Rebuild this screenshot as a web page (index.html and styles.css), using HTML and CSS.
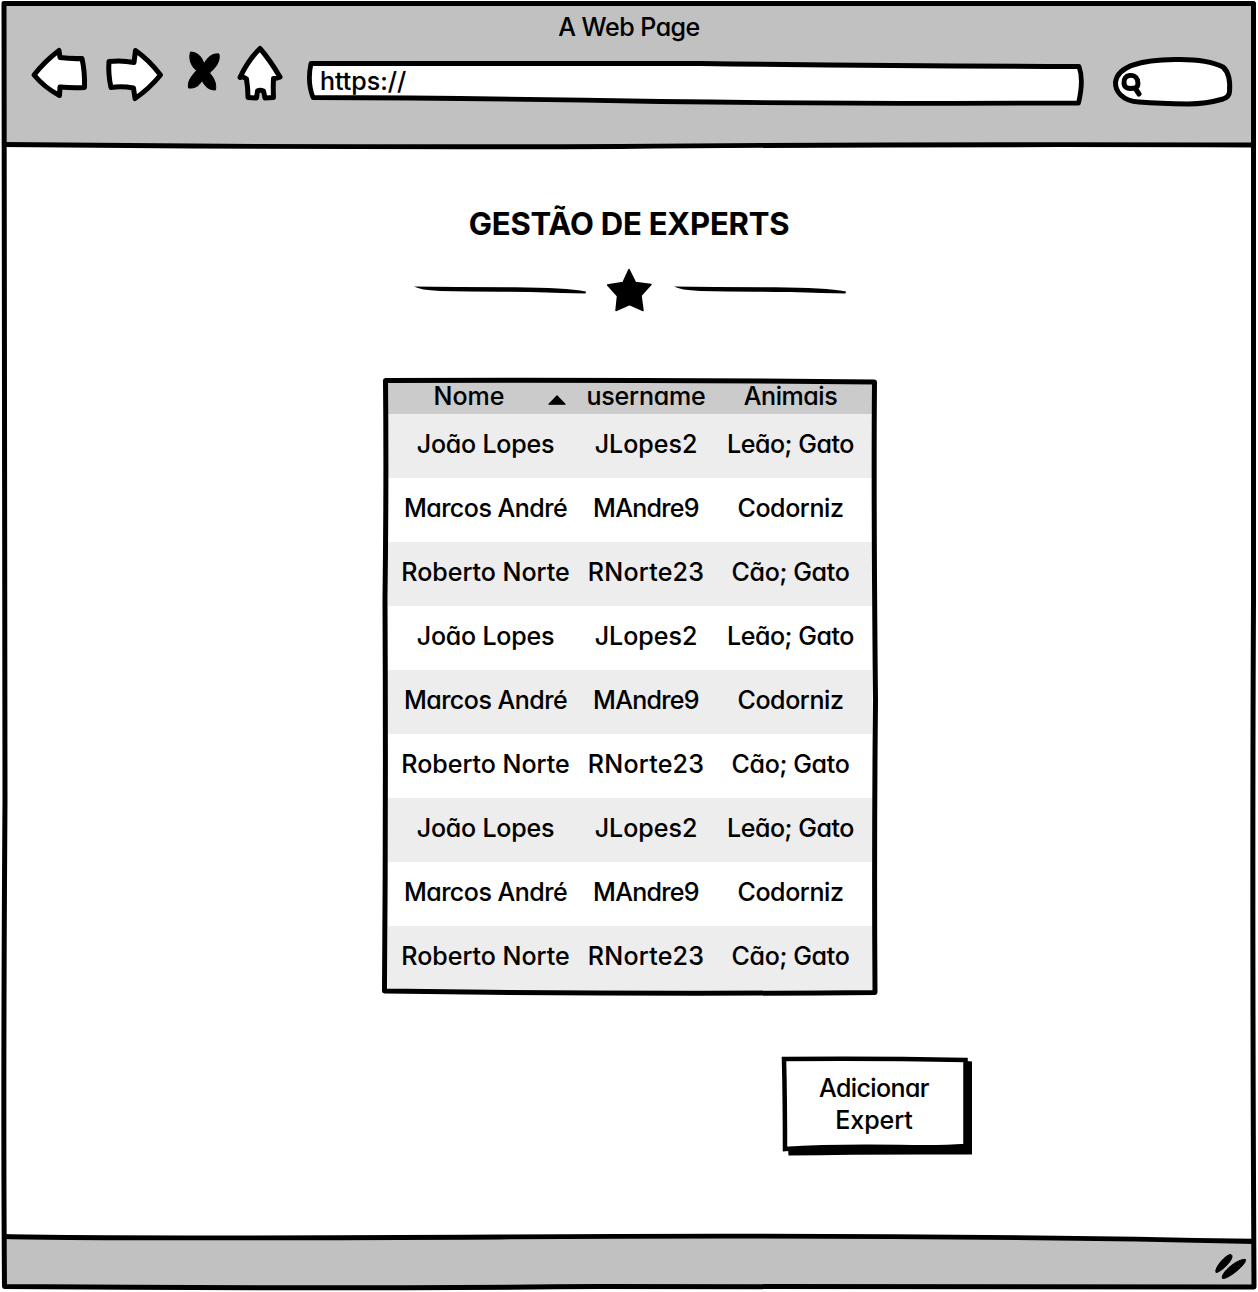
FILE: index.html
```html
<!DOCTYPE html>
<html lang="pt">
<head>
<meta charset="utf-8">
<title>Gestão de Experts</title>
<link rel="stylesheet" href="styles.css">
</head>
<body>
<div class="window">
  <header class="chrome">
    <div class="chrome-title">A Web Page</div>
    <div class="toolbar">
      <svg class="nav-icons" width="260" height="60" viewBox="28 44 260 60">
        <g fill="#fff" stroke="#000" stroke-width="5" stroke-linejoin="round" stroke-linecap="round">
          <path d="M34 75Q45 61 59 50.500L60 57.500Q71 59 82 58.500Q85 72 84.500 87.500Q72 88 60 87L59.500 95.500Q45 88 34 75Z"/>
          <path d="M109 61.500Q122 60 134 62.500L135.500 50.500Q149 60 160.500 75Q149 89 135 98.500L133.500 88Q122 86 111 87.500Q108 74 109 61.500Z"/>
          <path d="M260 48.500Q270 60 280 77Q277 78.500 273.500 78.500Q273 88 273.500 97.500L265 98L263.500 91Q260 89.500 257.500 91L256.500 98L248 97.500Q248 88 246.500 79Q243 76 240 77.500Q248 60 260 48.500Z"/>
        </g>
        <path d="M190.500 52C198 52.500 202 57 204 64C207 58 212 53 219 54C220.500 62 215 68 209.500 73C214 78 216.500 83 215.500 90C208 90 205 86 202 80.500C199 86 195 88.500 188.500 88C187.500 81 191 77 196.500 70.500C191 66 188.500 59 190.500 52Z" stroke="#000" stroke-linejoin="round"/>
      </svg>
      <div class="address">
        <svg class="sketch" width="778" height="46" viewBox="306 60 778 46"><path d="M311 63.500Q500 63 700 63.500Q900 66 1079 66.500Q1084 80 1078.500 103Q850 104 660 101.500Q480 98 313 97.500Q307 82 311 63.500Z" fill="#fff" stroke="#000" stroke-width="4.800" stroke-linejoin="round"/></svg>
        <span>https://</span>
      </div>
      <svg class="search" width="122" height="52" viewBox="1112 56 122 52">
        <path d="M1139 102C1122 101 1115 91 1115.500 82C1118 65 1143 60 1175 59.500C1197 59 1211 61 1223 67Q1231 74 1229.500 92Q1229 97 1223 99Q1206 104 1188 104Q1160 103.500 1139 102Z" fill="#fff" stroke="#000" stroke-width="5"/>
        <path d="M1124 83C1123 74 1135 73 1137.500 80Q1139 87 1135 88Q1124 90 1124 83ZM1135 88L1139 94" fill="none" stroke="#000" stroke-width="5" stroke-linecap="round"/>
      </svg>
    </div>
  </header>

  <main class="content">
    <h1 class="heading">GESTÃO DE EXPERTS</h1>
    <div class="divider">
      <svg width="172" height="8" viewBox="414 286 172 8"><path d="M414 286.500Q455 287 515 287.200Q565 287.500 586 291.500L585.500 293.500Q565 293 530 292Q470 291.500 440 291Q420 290 414 286.500Z"/></svg>
      <svg width="46" height="44" viewBox="607 268 46 44"><path d="M629 269.500L635.500 282.500L651 284.500L641 295.500L643 310.500L629.500 304.500L616 310.500L617.500 296L607.500 285L623 282.500Z" stroke="#000" stroke-width="1.500" stroke-linejoin="round"/></svg>
      <svg width="172" height="8" viewBox="414 286 172 8"><path d="M414 286.500Q455 287 515 287.200Q565 287.500 586 291.500L585.500 293.500Q565 293 530 292Q470 291.500 440 291Q420 290 414 286.500Z"/></svg>
    </div>

    <section class="experts">
      <div class="row head"><span>Nome</span><svg class="sort" width="18" height="10" viewBox="0 0 18 10"><path d="M9 .800L17 9.200H1Z" stroke="#000" stroke-width="1.200" stroke-linejoin="round"/></svg><span class="jl">username</span><span class="lg">Animais</span></div>
      <div class="row"><span class="jl">João Lopes</span><span>JLopes2</span><span class="lg">Leão; Gato</span></div>
      <div class="row"><span class="ma">Marcos André</span><span class="ma9">MAndre9</span><span class="co">Codorniz</span></div>
      <div class="row"><span>Roberto Norte</span><span class="rn23">RNorte23</span><span class="cg">Cão; Gato</span></div>
      <div class="row"><span class="jl">João Lopes</span><span>JLopes2</span><span class="lg">Leão; Gato</span></div>
      <div class="row"><span class="ma">Marcos André</span><span class="ma9">MAndre9</span><span class="co">Codorniz</span></div>
      <div class="row"><span>Roberto Norte</span><span class="rn23">RNorte23</span><span class="cg">Cão; Gato</span></div>
      <div class="row"><span class="jl">João Lopes</span><span>JLopes2</span><span class="lg">Leão; Gato</span></div>
      <div class="row"><span class="ma">Marcos André</span><span class="ma9">MAndre9</span><span class="co">Codorniz</span></div>
      <div class="row"><span>Roberto Norte</span><span class="rn23">RNorte23</span><span class="cg">Cão; Gato</span></div>
      <svg class="table-outline" width="500" height="620" viewBox="380 376 500 620"><path d="M385.500 380.500Q620 379.500 874.500 382Q873.500 500 875.500 700Q874 850 875 992.500Q630 994.500 384.500 991Q386 800 385 600Q386.500 480 385.500 380.500Z" fill="none" stroke="#000" stroke-width="5" stroke-linejoin="round"/></svg>
    </section>

    <button class="add" type="button">
      <svg class="sketch" width="192" height="100" viewBox="780 1056 192 100"><path d="M966 1061L972 1061.500V1154.500Q870 1154 788.500 1155.500L788 1148H966Z"/><path d="M784 1059Q870 1058 965.500 1060V1146Q940 1148 900 1147Q830 1146 785 1149Q785 1100 784 1059Z" fill="#fff" stroke="#000" stroke-width="4.500"/></svg>
      <span class="add-text"><span class="adic">Adicionar</span><span>Expert</span></span>
    </button>
  </main>

  <footer class="status">
    <svg width="34" height="28" viewBox="1213 1252 34 28"><path d="M1216 1272.500C1214 1268 1226 1254 1231 1254.500C1236 1258 1221 1272.500 1216 1272.500ZM1222.500 1278.500C1220 1273 1238 1258 1245.500 1259.500C1247 1264 1228 1279.500 1222.500 1278.500Z" stroke="#000" stroke-linejoin="round"/></svg>
  </footer>

  <svg class="outline" width="1258" height="1292" viewBox="0 0 1258 1292">
    <path d="M3 144.500Q300 147.500 620 146.500Q900 144 1254 145M4 1236.500Q100 1239 500 1237Q900 1234 1254 1241.500" fill="none" stroke="#000" stroke-width="4.800"/>
    <path d="M4.500 3.500H1253.500Q1253 250 1253.500 600Q1252 900 1254 1287Q900 1286 600 1286.500Q300 1289 4.500 1286.500Q3 1100 5 800Q3 450 4 3.500Z" fill="none" stroke="#000" stroke-width="5" stroke-linejoin="round"/>
  </svg>
</div>
</body>
</html>
```
FILE: styles.css
```css
* { box-sizing: border-box; }
body {
  margin: 0;
  background: #fff;
  color: #000;
  font: 500 25px/32px Inter, "Liberation Sans", sans-serif;
  font-feature-settings: "cv11" 1;
  -webkit-text-stroke: 0.1px #000;
}
svg { display: block; }
.window {
  position: relative;
  width: 1258px;
  height: 1292px;
  padding: 4px;
  display: grid;
  grid-template-rows: 142px 1fr 50px;
  overflow: hidden;
}
.outline { position: absolute; inset: 0; pointer-events: none; }
.chrome { background: #c1c1c1; }
.chrome-title { height: 40px; padding-top: 7px; text-align: center; letter-spacing: -0.5px; }
.toolbar { display: flex; align-items: flex-start; padding-left: 24px; }
.address {
  position: relative;
  display: flex;
  align-items: center;
  width: 778px;
  height: 46px;
  margin: 16px 28px 0 18px;
  padding: 0 0 5px 14px;
}
.sketch { position: absolute; inset: 0; }
.address span { position: relative; }
.search { margin-top: 12px; }

.content { display: flex; flex-direction: column; align-items: center; padding-top: 58px; }
.heading { margin: 0; font-size: 31px; line-height: 40px; font-weight: 700; letter-spacing: -0.2px; }
.divider { display: flex; align-items: center; gap: 21px; margin: 24px 0 0 2px; }
.experts {
  position: relative;
  width: 484px;
  margin: 70px 0 0 2px;
}
.row {
  display: grid;
  grid-template-columns: 195px 126px 163px;
  align-items: center;
  justify-items: center;
  height: 64px;
  padding-bottom: 5px;
}
.row span { white-space: nowrap; }
.row:nth-child(even) { background: #ededed; }
.row.head {
  grid-template-columns: 162px 33px 126px 163px;
  height: 32px;
  padding-bottom: 5px;
  align-content: center;
  background: #cbcbcb;
}
.sort { justify-self: start; margin: 8px 0 0 -2px; }
.jl { letter-spacing: -0.2px; }
.lg { letter-spacing: -0.45px; }
.ma { letter-spacing: -0.5px; }
.ma9 { letter-spacing: -0.7px; }
.co { letter-spacing: -0.4px; }
.rn23 { letter-spacing: 0.25px; }
.cg { letter-spacing: -0.35px; }
.adic { letter-spacing: -0.6px; }
.table-outline { position: absolute; left: -8px; top: -6px; }
.add {
  position: relative;
  width: 192px;
  height: 100px;
  margin: 66px 0 0 494px;
  padding: 16px 4px 0 0;
  border: 0;
  background: none;
  color: inherit;
  font: inherit;
  font-feature-settings: inherit;
}
.add-text { position: relative; display: flex; flex-direction: column; align-items: center; height: 84px; }
.status {
  display: flex;
  justify-content: flex-end;
  align-items: flex-start;
  padding: 14px 7px 0 0;
  background: #c1c1c1;
}
```
